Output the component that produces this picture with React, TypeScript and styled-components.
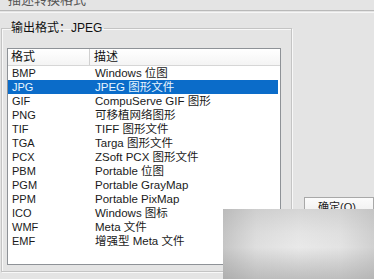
import React from "react";
import styled, { createGlobalStyle } from "styled-components";

const Global = createGlobalStyle`
  html, body { margin: 0; padding: 0; background: #e4e4e4; }
  body { font-family: "Liberation Sans", "Noto Sans CJK SC", sans-serif; font-size: 11px; color: #1a1a1a; }
  * { box-sizing: border-box; }
`;

const Page = styled.div`
  width: 374px;
  height: 279px;
  overflow: hidden;
  position: relative;
  background: #e4e4e4;
`;

const TitleStrip = styled.div`
  height: 10px;
  overflow: hidden;
  padding-left: 8px;
`;

const TitleText = styled.div`
  margin-top: -7px;
  font-size: 13px;
  line-height: 14px;
  color: #555;
`;

const Separator = styled.div`
  height: 3px;
  border-top: 1px solid #b9b9b9;
  border-bottom: 1px solid #f6f6f6;
`;

const Body = styled.div`
  display: flex;
  align-items: flex-start;
  padding-top: 8px;
`;

const Group = styled.fieldset`
  margin: 0 0 0 1px;
  width: 292px;
  height: 251px;
  padding: 0 10px 0 5px;
  border: 1px solid #c4c4c4;
  box-shadow: inset 1px 1px 0 #f8f8f8, 1px 1px 0 #f8f8f8;
`;

const Legend = styled.legend`
  padding: 0 2px 0 0;
  margin-left: 4px;
  font-size: 12px;
  line-height: 14px;
  color: #111;
`;

const List = styled.div`
  width: 274px;
  height: 217px;
  background: #fff;
  border: 1px solid #8e9297;
  display: flex;
  flex-direction: column;
  margin-top: 13px;
`;

const HeaderRow = styled.div`
  display: grid;
  grid-template-columns: 81px 1fr;
  height: 17px;
  background: linear-gradient(#ffffff, #f4f4f4);
  border-bottom: 1px solid #d6d6d6;
`;

const HeaderCell = styled.div<{ $divider?: boolean }>`
  font-size: 12px;
  line-height: 16px;
  padding-left: ${(p) => (p.$divider ? "4px" : "3px")};
  border-left: ${(p) => (p.$divider ? "1px solid #d0d0d0" : "none")};
  color: #111;
`;

const Row = styled.div<{ $selected?: boolean }>`
  display: grid;
  grid-template-columns: 81px 1fr;
  height: 14px;
  line-height: 14px;
  margin-right: 2px;
  background: ${(p) => (p.$selected ? "#0b6cc9" : "transparent")};
  color: ${(p) => (p.$selected ? "#e8f6ff" : "#1a1a1a")};
`;

const Cell = styled.div<{ $second?: boolean }>`
  padding-left: ${(p) => (p.$second ? "6px" : "4px")};
  white-space: nowrap;
  overflow: hidden;
  font-size: ${(p) => (p.$second ? "11.5px" : "11px")};
`;

const Side = styled.div`
  padding-top: 176px;
  padding-left: 12px;
`;

const Button = styled.div`
  width: 70px;
  height: 22px;
  border: 1px solid #a8a8a8;
  background: linear-gradient(#fbfbfb, #ececec);
  font-size: 11px;
  line-height: 18px;
  padding-left: 13px;
  color: #222;
`;

const Blur = styled.div`
  position: absolute;
  left: 223px;
  top: 209px;
  width: 151px;
  height: 70px;
  backdrop-filter: blur(6px);
  background:
    linear-gradient(90deg, rgba(170,170,170,0.55) 0%, rgba(205,205,205,0.35) 22%, rgba(236,236,236,0.2) 50%, rgba(215,215,215,0.3) 78%, rgba(185,185,185,0.5) 100%),
    linear-gradient(180deg, #cfcfcf 0%, #e3e3e3 35%, #e8e8e8 55%, #c9c9c9 80%, #b3b3b3 100%);
`;

const rows: [string, string][] = [
  ["BMP", "Windows 位图"],
  ["JPG", "JPEG 图形文件"],
  ["GIF", "CompuServe GIF 图形"],
  ["PNG", "可移植网络图形"],
  ["TIF", "TIFF 图形文件"],
  ["TGA", "Targa 图形文件"],
  ["PCX", "ZSoft PCX 图形文件"],
  ["PBM", "Portable 位图"],
  ["PGM", "Portable GrayMap"],
  ["PPM", "Portable PixMap"],
  ["ICO", "Windows 图标"],
  ["WMF", "Meta 文件"],
  ["EMF", "增强型 Meta 文件"],
];

export default function App() {
  return (
    <Page>
      <Global />
      <TitleStrip>
        <TitleText>描述转换格式</TitleText>
      </TitleStrip>
      <Separator />
      <Body>
        <Group>
          <Legend>输出格式：JPEG</Legend>
          <List>
            <HeaderRow>
              <HeaderCell>格式</HeaderCell>
              <HeaderCell $divider>描述</HeaderCell>
            </HeaderRow>
            {rows.map(([fmt, desc]) => (
              <Row key={fmt} $selected={fmt === "JPG"}>
                <Cell>{fmt}</Cell>
                <Cell $second>{desc}</Cell>
              </Row>
            ))}
          </List>
        </Group>
        <Side>
          <Button>确定(O)</Button>
        </Side>
      </Body>
      <Blur />
    </Page>
  );
}
